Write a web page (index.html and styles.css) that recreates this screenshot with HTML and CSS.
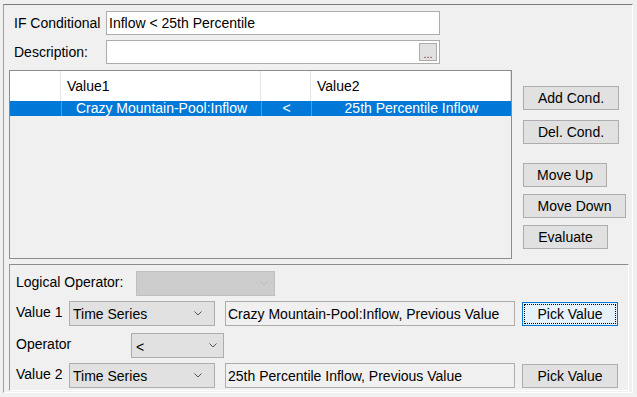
FILE: index.html
```html
<!DOCTYPE html>
<html lang="en">
<head>
  <meta charset="UTF-8">
  <title>IF Conditional</title>
  <link rel="stylesheet" href="styles.css">
</head>
<body>
  <div class="frame">
    <div class="field-row">
      <span class="field-label">IF Conditional</span>
      <div class="text-input">Inflow &lt; 25th Percentile</div>
    </div>
    <div class="field-row second">
      <span class="field-label">Description:</span>
      <div class="text-input">
        <span class="dots-btn">...</span>
      </div>
    </div>

    <div class="middle">
      <div class="cond-table">
        <div class="t-row t-head">
          <div class="cell c0"></div>
          <div class="cell c1">Value1</div>
          <div class="cell c2"></div>
          <div class="cell c3">Value2</div>
        </div>
        <div class="t-row t-selected">
          <div class="cell c0"></div>
          <div class="cell c1">Crazy Mountain-Pool:Inflow</div>
          <div class="cell c2">&lt;</div>
          <div class="cell c3">25th Percentile Inflow</div>
        </div>
      </div>

      <div class="side">
        <button class="btn w96">Add Cond.</button>
        <button class="btn w96 gap10">Del. Cond.</button>
        <button class="btn w84 gap19">Move Up</button>
        <button class="btn w103 gap7">Move Down</button>
        <button class="btn w85 gap7">Evaluate</button>
      </div>
    </div>

    <div class="lower">
      <div class="lrow">
        <span class="llabel lw-logic">Logical Operator:</span>
        <div class="combo disabled w139">
          <span></span>
          <svg class="chev" width="8" height="5" viewBox="0 0 8 5"><polyline points="0.5,0.5 4,4 7.5,0.5" fill="none" stroke="#b8b8b8" stroke-width="1"/></svg>
        </div>
      </div>
      <div class="lrow gap5">
        <span class="llabel lw-val">Value 1</span>
        <div class="combo w146 wide-arrow">
          <span>Time Series</span>
          <svg class="chev" width="8" height="5" viewBox="0 0 8 5"><polyline points="0.5,0.5 4,4 7.5,0.5" fill="none" stroke="#555" stroke-width="1"/></svg>
        </div>
        <div class="value-box">Crazy Mountain-Pool:Inflow, Previous Value</div>
        <button class="btn pick focused"><span class="focus-ring">Pick Value</span></button>
      </div>
      <div class="lrow gap7">
        <span class="llabel lw-op">Operator</span>
        <div class="combo w93">
          <span class="op-text">&lt;</span>
          <svg class="chev" width="8" height="5" viewBox="0 0 8 5"><polyline points="0.5,0.5 4,4 7.5,0.5" fill="none" stroke="#555" stroke-width="1"/></svg>
        </div>
      </div>
      <div class="lrow gap5">
        <span class="llabel lw-val">Value 2</span>
        <div class="combo w146 wide-arrow">
          <span>Time Series</span>
          <svg class="chev" width="8" height="5" viewBox="0 0 8 5"><polyline points="0.5,0.5 4,4 7.5,0.5" fill="none" stroke="#555" stroke-width="1"/></svg>
        </div>
        <div class="value-box">25th Percentile Inflow, Previous Value</div>
        <button class="btn pick">Pick Value</button>
      </div>
    </div>
  </div>
</body>
</html>
```

FILE: styles.css
```css
body {
  margin: 0;
  background: #f0f0f0;
  font-family: "Liberation Sans", Arial, sans-serif;
  font-size: 14px;
  color: #000;
}

.frame {
  box-sizing: border-box;
  margin: 4px 0 0 3px;
  width: 630px;
  height: 389px;
  border: 1px solid;
  border-color: #7a7a7a #fff #fff #a0a0a0;
  padding: 6px 0 0 5px;
}

.field-row {
  display: flex;
  align-items: center;
  height: 24px;
}

.field-row.second {
  margin-top: 5px;
}

.field-label {
  box-sizing: border-box;
  width: 97px;
  padding-left: 5px;
  padding-bottom: 1px;
}

.text-input {
  box-sizing: border-box;
  display: flex;
  align-items: center;
  width: 334px;
  height: 24px;
  padding-left: 2px;
  border: 1px solid #acacac;
  background: #fff;
}

.dots-btn {
  box-sizing: border-box;
  margin-left: auto;
  margin-right: 2px;
  width: 18px;
  height: 18px;
  border: 1px solid #adadad;
  background: #e1e1e1;
  color: #444;
  font-size: 11px;
  line-height: 20px;
  text-align: center;
}

/* table of conditions */
.middle {
  display: flex;
  margin-top: 6px;
}

.cond-table {
  box-sizing: border-box;
  width: 503px;
  height: 189px;
  border: 1px solid #8c8c8c;
  background: #f0f0f0;
}

.t-row {
  display: flex;
}

.cell {
  box-sizing: border-box;
  white-space: nowrap;
}

.c0 { width: 51px; }
.c1 { width: 200px; }
.c2 { width: 50px; }
.c3 { width: 200px; }

.t-head {
  height: 30px;
  background: #fff;
}

.t-head .cell {
  display: flex;
  align-items: center;
  padding-left: 6px;
  border-right: 1px solid #e5e5e5;
}

.t-selected {
  height: 15px;
  background: #0078d7;
  color: #fff;
}

.t-selected .cell {
  line-height: 15px;
  text-align: center;
  border-left: 1px solid #a8855f;
}

.t-selected .c0 {
  border-left: none;
}

.side {
  display: flex;
  flex-direction: column;
  align-items: flex-start;
  margin-left: 11px;
  padding-top: 16px;
}

.btn {
  box-sizing: border-box;
  height: 24px;
  padding: 0;
  border: 1px solid #adadad;
  background: #e1e1e1;
  font-family: "Liberation Sans", Arial, sans-serif;
  font-size: 14px;
  color: #000;
}

.w84 { width: 84px; }
.w85 { width: 85px; }
.w96 { width: 96px; }
.w103 { width: 103px; }
.gap7 { margin-top: 7px; }
.gap10 { margin-top: 10px; }
.gap19 { margin-top: 19px; }

/* lower editor */
.lower {
  box-sizing: border-box;
  margin-top: 5px;
  width: 620px;
  height: 127px;
  border: 1px solid;
  border-color: #8c8c8c #fff #fff #9a9a9a;
  padding: 6px 0 0 6px;
}

.lrow {
  display: flex;
  align-items: center;
  height: 25px;
}

.lrow.gap5 { margin-top: 5px; }
.lrow.gap7 { margin-top: 7px; }

.llabel {
  padding-bottom: 3px;
}

.lw-logic { width: 120px; }
.lw-val { width: 53px; }
.lw-op { width: 115px; }

.combo {
  box-sizing: border-box;
  display: flex;
  align-items: center;
  height: 25px;
  padding-left: 3px;
  border: 1px solid #adadad;
  background: #e1e1e1;
}

.combo .chev {
  margin-left: auto;
  margin-right: 6px;
}

.combo.wide-arrow .chev {
  margin-right: 12px;
}

.combo.disabled {
  border-color: #bfbfbf;
  background: #cccccc;
}

.op-text {
  padding-left: 1px;
  padding-top: 3px;
}

.w93 { width: 93px; }
.w139 { width: 139px; }
.w146 { width: 146px; }

.value-box {
  box-sizing: border-box;
  display: flex;
  align-items: center;
  width: 290px;
  height: 25px;
  margin-left: 10px;
  padding-left: 2px;
  border: 1px solid #adadad;
  background: #f0f0f0;
  white-space: nowrap;
}

.pick {
  width: 96px;
  margin-left: 7px;
}

.pick.focused {
  border-color: #0078d7;
  background: #e5f1fb;
  padding: 1px;
}

.focus-ring {
  display: flex;
  align-items: center;
  justify-content: center;
  box-sizing: border-box;
  width: 100%;
  height: 100%;
  border: 1px dotted #000;
}
```
